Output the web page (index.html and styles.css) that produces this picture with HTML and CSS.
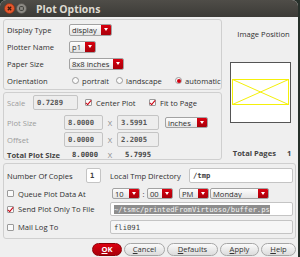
FILE: index.html
```html
<!DOCTYPE html>
<html lang="en">
  <head>
    <meta charset="UTF-8" />
    <meta name="viewport" content="width=device-width, initial-scale=1.0" />
    <title>Plot Options</title>
    <link rel="stylesheet" href="styles.css">
  </head>
  <body>
    <div class="window">
      <div class="titlebar">
        <svg class="wm-btn" width="11" height="11" viewBox="0 0 11 11">
          <circle cx="5.5" cy="5.5" r="5" fill="#e6582e" stroke="#8e3519" stroke-width="0.8" />
          <path d="M3.8 3.8 L7.2 7.2 M7.2 3.8 L3.8 7.2" stroke="#3a1a0c" stroke-width="1.3" />
        </svg>
        <svg class="wm-btn" width="11" height="11" viewBox="0 0 11 11">
          <circle cx="5.5" cy="5.5" r="5" fill="#8c8a84" stroke="#55534e" stroke-width="0.8" />
          <rect x="3.6" y="3.6" width="3.8" height="3.8" rx="0.8" fill="none" stroke="#3c3b37" stroke-width="1" />
        </svg>
        <span class="title">Plot Options</span>
      </div>

      <div class="content">
        <div class="top">
          <div class="left">
            <div class="group group-paper">
              <div class="row">
                <span class="label">Display Type</span>
                <span class="combo w-display"><span class="combo-text">display</span><span class="combo-arrow"></span></span>
              </div>
              <div class="row">
                <span class="label">Plotter Name</span>
                <span class="combo w-p1"><span class="combo-text">p1</span><span class="combo-arrow"></span></span>
              </div>
              <div class="row">
                <span class="label">Paper Size</span>
                <span class="combo w-paper"><span class="combo-text">8x8 inches</span><span class="combo-arrow"></span></span>
              </div>
              <div class="row">
                <span class="label">Orientation</span>
                <span class="radio"></span><span class="opt opt-portrait">portrait</span>
                <span class="radio"></span><span class="opt opt-landscape">landscape</span>
                <span class="radio on"></span><span class="opt">automatic</span>
              </div>
            </div>

            <div class="group group-scale">
              <div class="row row-scale">
                <span class="label muted w-scale">Scale</span>
                <span class="field disabled w-scalebox">0.7289</span>
                <span class="check on"></span><span class="opt opt-center">Center Plot</span>
                <span class="check on"></span><span class="opt">Fit to Page</span>
              </div>
              <div class="row row-size">
                <span class="label muted w-size">Plot Size</span>
                <span class="field disabled w-num">8.0000</span>
                <span class="times">X</span>
                <span class="field disabled w-num2">3.5991</span>
                <span class="combo w-inches"><span class="combo-text">inches</span><span class="combo-arrow"></span></span>
              </div>
              <div class="row row-offset">
                <span class="label muted w-size">Offset</span>
                <span class="field disabled w-num">0.0000</span>
                <span class="times">X</span>
                <span class="field disabled w-num2">2.2005</span>
              </div>
              <div class="row row-total">
                <span class="label strong w-size">Total Plot Size</span>
                <span class="value w-num">8.0000</span>
                <span class="times">X</span>
                <span class="value">5.7995</span>
              </div>
            </div>
          </div>

          <div class="right">
            <span class="image-title">Image Position</span>
            <svg class="preview" width="61" height="61" viewBox="0 0 61 61">
              <rect x="0.5" y="0.5" width="60" height="60" fill="#ffffff" stroke="#555555" />
              <rect x="2.5" y="17.5" width="56" height="25" fill="none" stroke="#f4f00a" />
              <path d="M2.5 17.5 L58.5 42.5 M58.5 17.5 L2.5 42.5" stroke="#f4f00a" />
            </svg>
            <div class="pages">
              <span class="strong">Total Pages</span>
              <span class="strong">1</span>
            </div>
          </div>
        </div>

        <div class="group group-output">
          <div class="row row-copies">
            <span class="label w-copies">Number Of Copies</span>
            <span class="field white w-copybox">1</span>
            <span class="label w-tmp">Local Tmp Directory</span>
            <span class="field white grow">/tmp</span>
          </div>
          <div class="row row-queue">
            <span class="check"></span><span class="opt w-queue">Queue Plot Data At</span>
            <span class="combo w-hour"><span class="combo-text">10</span><span class="combo-arrow"></span></span>
            <span class="colon">:</span>
            <span class="combo w-min"><span class="combo-text">00</span><span class="combo-arrow"></span></span>
            <span class="combo w-ampm"><span class="combo-text">PM</span><span class="combo-arrow"></span></span>
            <span class="combo w-day"><span class="combo-text">Monday</span><span class="combo-arrow"></span></span>
          </div>
          <div class="row row-file">
            <span class="check on"></span><span class="opt w-send">Send Plot Only To File</span>
            <span class="field white grow"><span class="selected">~/tsmc/printedFromVirtuoso/buffer.ps</span></span>
          </div>
          <div class="row row-mail">
            <span class="check"></span><span class="opt w-send">Mail Log To</span>
            <span class="field light grow">fli091</span>
          </div>
        </div>

        <div class="buttons">
          <button type="button" class="btn btn-ok w-ok"><u>O</u>K</button>
          <button type="button" class="btn w-cancel"><u>C</u>ancel</button>
          <button type="button" class="btn w-defaults"><u>D</u>efaults</button>
          <button type="button" class="btn w-apply"><u>A</u>pply</button>
          <button type="button" class="btn w-help"><u>H</u>elp</button>
        </div>
      </div>
    </div>
  </body>
</html>
```

FILE: styles.css
```css
* {
  box-sizing: border-box;
}

body {
  margin: 0;
  background: #26302a;
  font-family: "Open Sans", "DejaVu Sans", sans-serif;
  font-size: 7.6px;
  color: #303030;
}

.window {
  width: 298px;
  height: 257px;
  background: #efefef;
  border-radius: 6px 6px 0 0;
  overflow: hidden;
}

.titlebar {
  height: 17px;
  display: flex;
  align-items: center;
  gap: 1px;
  padding-left: 4px;
  background: linear-gradient(#4f4d48, #3c3b37);
}

.title {
  margin-left: 8px;
  color: #dfdbd2;
  font-weight: bold;
  font-size: 10.4px;
}

.content {
  padding: 2px 2px 0 3px;
}

.top {
  display: flex;
  gap: 3px;
}

.left {
  width: 219px;
  display: flex;
  flex-direction: column;
  gap: 2px;
}

.group {
  border: 1px solid #cfcfcf;
  border-radius: 3px;
  padding-left: 3px;
}

.group-paper {
  height: 71px;
  padding-top: 3px;
  display: flex;
  flex-direction: column;
  gap: 4px;
}

.group-scale {
  height: 68px;
  padding-top: 2px;
}

.row {
  display: flex;
  align-items: center;
  height: 13px;
  white-space: nowrap;
}

.label {
  width: 62px;
  flex: none;
}

.muted {
  color: #9c9c9c;
}

.strong {
  font-weight: bold;
  color: #444;
}

/* combo boxes */
.combo {
  display: flex;
  height: 12px;
  border: 1px solid #a2a2a2;
  border-radius: 2px;
  background: linear-gradient(#fdfdfd, #e4e4e4);
  overflow: hidden;
  flex: none;
}

.combo-text {
  flex: 1;
  padding-left: 2px;
  line-height: 10px;
  color: #2e2e2e;
}

.combo-arrow {
  width: 10px;
  display: flex;
  align-items: center;
  justify-content: center;
  background: linear-gradient(#d9000f, #a8000a);
}

.combo-arrow::after {
  content: "";
  border-left: 2.5px solid transparent;
  border-right: 2.5px solid transparent;
  border-top: 3px solid #ffffff;
}

.w-display { width: 43px; }
.w-p1 { width: 27px; }
.w-paper { width: 55px; }
.w-inches { width: 43px; height: 11px; margin-left: 6px; }

/* radio and check */
.radio {
  width: 7px;
  height: 7px;
  border: 1px solid #9a9a9a;
  border-radius: 50%;
  background: #fafafa;
  margin-left: 3px;
  margin-right: 3px;
  flex: none;
  display: flex;
  align-items: center;
  justify-content: center;
}

.radio.on::after {
  content: "";
  width: 4px;
  height: 4px;
  border-radius: 50%;
  background: #d00010;
}

.opt-portrait { width: 31px; }
.opt-landscape { width: 46px; }

.check {
  width: 7px;
  height: 7px;
  border: 1px solid #9a9a9a;
  border-radius: 1px;
  background: #fafafa;
  margin-right: 4px;
  flex: none;
  position: relative;
}

.check.on::after {
  content: "";
  position: absolute;
  left: 1px;
  top: -1px;
  width: 2px;
  height: 5px;
  border-right: 1.5px solid #cc0010;
  border-bottom: 1.5px solid #cc0010;
  transform: rotate(40deg);
}

/* text fields */
.field {
  height: 15px;
  border: 1px solid #c4c4c4;
  border-radius: 2px;
  padding-left: 3px;
  display: flex;
  align-items: center;
  font-family: "DejaVu Sans Mono", "Liberation Mono", monospace;
  font-size: 7.2px;
  font-weight: bold;
  color: #3e3e3e;
  flex: none;
}

.field.disabled {
  background: #ededed;
  color: #555;
}

.field.white {
  background: #ffffff;
}

.field.light {
  background: #f6f6f6;
}

.grow {
  flex: 1;
}

.value {
  font-family: "DejaVu Sans Mono", "Liberation Mono", monospace;
  font-size: 7.2px;
  font-weight: bold;
  color: #444;
  padding-left: 8px;
}

.times {
  width: 14px;
  text-align: center;
  color: #888;
  flex: none;
}

.row-scale {
  height: 15px;
}

.w-scale { width: 26px; }
.w-scalebox { width: 45px; margin-right: 7px; }
.opt-center { width: 53px; }

.row-size {
  height: 15px;
  margin-top: 5px;
}

.row-offset {
  height: 15px;
  margin-top: 2px;
}

.row-total {
  height: 11px;
  margin-top: 2px;
}

.w-size { width: 57px; }
.w-num { width: 39px; }
.w-num2 { width: 42px; }

/* right column */
.right {
  width: 71px;
  display: flex;
  flex-direction: column;
  align-items: center;
}

.image-title {
  margin-top: 10px;
  margin-left: 6px;
}

.preview {
  margin-top: 23px;
  margin-left: -1px;
}

.pages {
  margin-top: 25px;
  display: flex;
  gap: 11px;
  margin-left: 3px;
}

/* output group */
.group-output {
  margin-top: 3px;
  height: 76px;
  padding-top: 4px;
  padding-right: 2px;
}

.row-copies {
  height: 15px;
}

.w-copies { width: 79px; }
.w-copybox { width: 15px; margin-right: 9px; }
.w-tmp { width: 79px; }

.row-queue {
  height: 11px;
  margin-top: 5px;
}

.w-queue { width: 94px; }
.w-hour { width: 28px; height: 11px; }
.w-min { width: 26px; height: 11px; }
.w-ampm { width: 30px; height: 11px; margin-left: 6px; }
.w-day { width: 59px; height: 11px; margin-left: 1px; }

.colon {
  width: 7px;
  text-align: center;
}

.row-file {
  height: 14px;
  margin-top: 3px;
}

.row-file .field,
.row-mail .field {
  height: 14px;
  font-weight: normal;
}

.w-send { width: 92px; }

.selected {
  background: #8d8d8d;
  color: #f4f4f4;
}

.row-mail {
  height: 14px;
  margin-top: 4px;
}

/* dialog buttons */
.buttons {
  display: flex;
  justify-content: flex-end;
  gap: 2px;
  margin-top: 4px;
}

.btn {
  height: 13px;
  padding: 0;
  border: 1px solid #a6a6a6;
  border-radius: 7px;
  background: linear-gradient(#fafafa, #dcdcdc);
  font-family: "Open Sans", "DejaVu Sans", sans-serif;
  font-size: 7.6px;
  color: #333;
  line-height: 11px;
}

.btn-ok {
  border-color: #8a0008;
  background: linear-gradient(#dc0010, #a8000a);
  color: #ffffff;
  font-weight: bold;
}

.w-ok { width: 30px; }
.w-cancel { width: 41px; }
.w-defaults { width: 51px; }
.w-apply { width: 39px; }
.w-help { width: 35px; }
```
